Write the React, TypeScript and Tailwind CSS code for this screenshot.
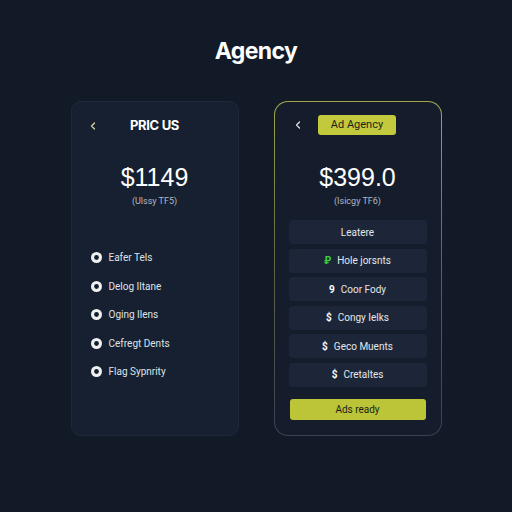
import { ChevronLeft } from "lucide-react";

const features = ["Eafer Tels", "Delog Iltane", "Oging Ilens", "Cefregt Dents", "Flag Sypnrity"];

const rows = [
  { mark: "", label: "Leatere" },
  { mark: "₽", label: "Hole jorsnts", green: true },
  { mark: "9", label: "Coor Fody" },
  { mark: "$", label: "Congy Ielks" },
  { mark: "$", label: "Geco Muents" },
  { mark: "$", label: "Cretaltes" },
];

function RingIcon() {
  return (
    <svg width="11" height="11" viewBox="0 0 12 12" className="shrink-0">
      <circle cx="6" cy="6" r="6" fill="#eef0f2" />
      <circle cx="6" cy="6" r="2.6" fill="#151d2b" />
    </svg>
  );
}

export default function App() {
  return (
    <div
      className="w-[512px] h-[512px] bg-[#131a27] flex flex-col items-center text-white"
      style={{ fontFamily: "Roboto, 'Liberation Sans', sans-serif" }}
    >
      <h1 className="mt-[37px] text-[23px] font-bold leading-[28px] tracking-tight" style={{ fontFamily: "Inter, sans-serif" }}>
        Agency
      </h1>

      <div className="mt-[36px] flex gap-[35px]">
        {/* basic plan */}
        <div className="w-[168px] h-[335px] rounded-[10px] bg-[#162030] border border-[#1f2939] flex flex-col">
          <div className="relative flex items-center justify-center h-[20px] mt-[14px]">
            <ChevronLeft className="absolute left-[15px] text-[#d8d49a]" size={12} strokeWidth={2.5} />
            <span className="text-[13px] font-bold tracking-tight" style={{ fontFamily: "Inter, sans-serif" }}>
              PRIC US
            </span>
          </div>
          <div className="mt-[24px] text-center text-[25px] leading-[34px]" style={{ fontFamily: "'Liberation Sans', sans-serif" }}>
            $1149
          </div>
          <div className="mt-[1px] text-center text-[9px] leading-[12px] text-[#b3b8c2]">(Ulssy TF5)</div>
          <ul className="mt-[45px] pl-[19px] flex flex-col gap-[17.5px]">
            {features.map((f) => (
              <li key={f} className="flex items-center gap-[7px] text-[10px] leading-[11px] text-[#dfe2e7]">
                <RingIcon />
                {f}
              </li>
            ))}
          </ul>
        </div>

        {/* agency plan */}
        <div className="w-[168px] h-[335px] rounded-[14px] p-px bg-gradient-to-b from-[#a2a84a] via-[#5f6442] to-[#394052]">
          <div className="w-full h-full rounded-[13px] bg-[#151d2c] flex flex-col px-[14px]">
            <div className="relative flex items-center justify-center h-[20px] mt-[13px]">
              <ChevronLeft className="absolute left-[3px] text-[#dfe1e4]" size={12} strokeWidth={2.5} />
              <span className="mr-[1px] w-[78px] h-[20px] rounded-[3px] bg-[#c3c93c] text-[#1b1f16] text-[11px] flex items-center justify-center">
                Ad Agency
              </span>
            </div>
            <div className="mt-[25px] text-center text-[25px] leading-[34px]" style={{ fontFamily: "'Liberation Sans', sans-serif" }}>
              $399.0
            </div>
            <div className="mt-[1px] text-center text-[9px] leading-[12px] text-[#b3b8c2]">(Isicgy TF6)</div>
            <div className="mt-[13px] flex flex-col gap-[4.5px]">
              {rows.map((r) => (
                <div
                  key={r.label}
                  className="h-[24px] rounded-[4px] bg-[#1d2638] flex items-center justify-center gap-[6px] text-[10px] text-[#e4e6ea]"
                >
                  {r.mark && (
                    <span className={r.green ? "text-[#3ad13a] font-bold" : "text-white font-bold"}>{r.mark}</span>
                  )}
                  {r.label}
                </div>
              ))}
            </div>
            <button className="mt-[12.5px] mx-[1px] h-[21px] rounded-[3px] bg-[#bcc437] text-[#1b1f16] text-[10px]">
              Ads ready
            </button>
          </div>
        </div>
      </div>
    </div>
  );
}
